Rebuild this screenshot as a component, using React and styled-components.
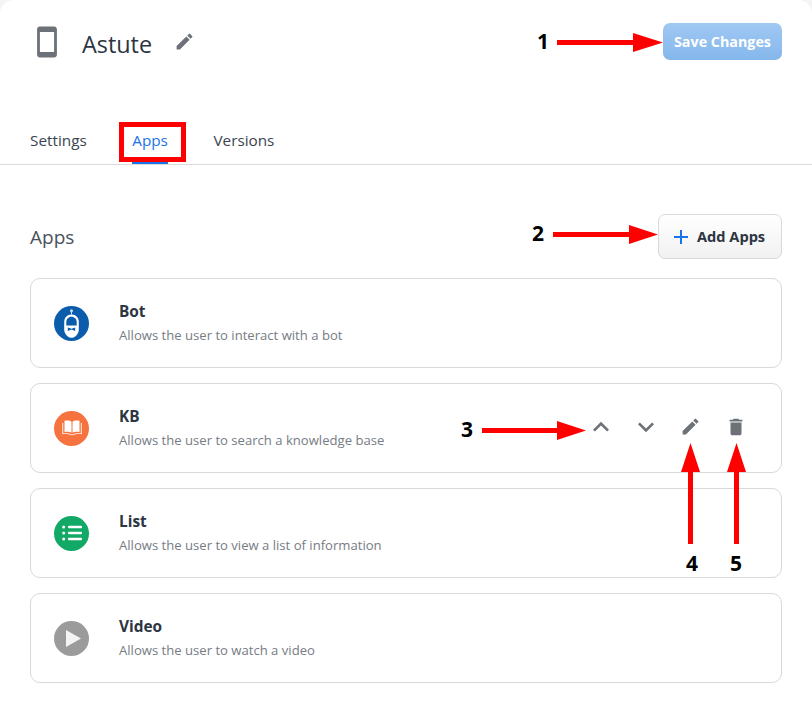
import React from 'react';
import styled, { createGlobalStyle } from 'styled-components';
import { MdSmartphone, MdEdit, MdAdd, MdKeyboardArrowUp, MdKeyboardArrowDown, MdDelete } from 'react-icons/md';

const GlobalStyle = createGlobalStyle`
  html, body { margin: 0; padding: 0; background: #f4f4f4; }
  body { font-family: "Open Sans", "Noto Sans", sans-serif; color: #2c3542; }
  * { box-sizing: border-box; }
`;

const Page = styled.div`
  position: relative;
  width: 812px;
  height: 713px;
  background: #fff;
  border-radius: 14px 14px 0 0;
  overflow: hidden;
`;

const Header = styled.header`
  display: flex;
  align-items: flex-start;
  justify-content: space-between;
  height: 122px;
  padding: 23px 30px 0;
`;

const TitleGroup = styled.div`
  display: flex;
  align-items: center;
  height: 37px;
  color: #6c7278;
`;

const AppName = styled.h1`
  margin: 4px 22px 0 18px;
  font-size: 23.4px;
  font-weight: 400;
  line-height: 42px;
  color: #2c3542;
`;

const SaveButton = styled.button`
  width: 119px;
  height: 37px;
  padding: 0;
  border: 0;
  border-radius: 7px;
  background: linear-gradient(#a0c8f3, #85b7ec);
  color: #fff;
  font: 700 14.3px "Open Sans", sans-serif;
`;

const Tabs = styled.nav`
  display: flex;
  gap: 45.5px;
  height: 43px;
  padding-left: 30px;
  border-bottom: 1px solid #dcdcdc;
`;

const Tab = styled.a`
  height: 42px;
  padding-top: 6px;
  font-size: 15.3px;
  line-height: 24px;
  color: ${p => (p.$active ? '#1a73e8' : '#3b4450')};
  border-bottom: 3px solid ${p => (p.$active ? '#1a73e8' : 'transparent')};
`;

const Content = styled.main`
  padding: 49px 30px 0;
`;

const SectionHead = styled.div`
  display: flex;
  align-items: center;
  justify-content: space-between;
  height: 45px;
  margin-bottom: 19px;
`;

const SectionTitle = styled.h2`
  margin: 0;
  font-size: 19px;
  font-weight: 400;
  color: #4a525c;
`;

const AddButton = styled.button`
  display: flex;
  align-items: center;
  gap: 4px;
  width: 124px;
  height: 45px;
  padding: 0 0 2px 10px;
  border: 1px solid #d9d9d9;
  border-radius: 7px;
  background: linear-gradient(#fff, #f1f1f1);
  color: #2c3542;
  font: 700 14.6px "Open Sans", sans-serif;

  svg { color: #1a73e8; margin-top: 2px; }
`;

const CardList = styled.div`
  display: flex;
  flex-direction: column;
  gap: 15px;
`;

const Card = styled.div`
  display: flex;
  align-items: center;
  height: 90px;
  padding: 0 23px;
  border: 1px solid #d9d9d9;
  border-radius: 10px;
  background: #fff;
`;

const AppIcon = styled.div`
  display: flex;
  align-items: center;
  justify-content: center;
  flex: none;
  width: 35px;
  height: 35px;
  border-radius: 50%;
  background: ${p => p.$color};
`;

const CardText = styled.div`
  flex: 1;
  margin-left: 30px;
  padding-top: 1px;
`;

const CardTitle = styled.div`
  font-size: 15.4px;
  font-weight: 700;
  line-height: 20px;
  color: #2c3542;
`;

const CardDesc = styled.div`
  margin-top: 3px;
  font-size: 13.1px;
  line-height: 20px;
  color: #767c84;
`;

const Actions = styled.div`
  display: flex;
  margin-top: -3px;
  color: #6c7278;
`;

const ActionSlot = styled.span`
  display: flex;
  align-items: center;
  justify-content: center;
  width: 45px;
`;

const Overlay = styled.svg`
  position: absolute;
  inset: 0;
  pointer-events: none;
`;

const Note = styled.span`
  position: absolute;
  left: ${p => p.$x}px;
  top: ${p => p.$y}px;
  width: 20px;
  font-size: 21px;
  font-weight: 700;
  line-height: 28px;
  text-align: center;
  color: #000;
`;

const BotIcon = () => (
  <svg width="35" height="35" viewBox="0 0 35 35">
    <circle cx="17.500" cy="4.700" r="1.500" fill="#cfe0f2" />
    <rect x="17" y="5.500" width="1" height="3" fill="#cfe0f2" />
    <path d="M17.500 8.500c4.500 0 7.300 3.300 7.300 7.500v7.500c0 4.700-4.200 8.300-7.300 8.300s-7.300-3.600-7.300-8.300V16c0-4.200 2.800-7.500 7.300-7.500z" fill="#fff" />
    <path d="M12.300 19.500v-3.500c0-3 2.200-5.300 5.200-5.300s5.200 2.300 5.200 5.300v3.500z" fill="#0b5cab" />
    <path d="M13.800 21.500l3.700 1.300 3.700-1.300v3.400l-3.700-1.300-3.700 1.300z" fill="#0b5cab" />
  </svg>
);

const BookIcon = () => (
  <svg width="20" height="16" viewBox="0 0 20 16" fill="#fff">
    <path d="M2.500 0.800c2.800-.600 5.800-.300 7 .900v11c-1.700-1-4.500-1.200-7-.700z" />
    <path d="M17.500 0.800c-2.800-.600-5.800-.300-7 .900v11c1.700-1 4.500-1.200 7-.700z" />
    <path d="M0 3v11.300c3.300-.500 6.500-.200 8.500 1h3c2-1.200 5.200-1.500 8.500-1V3h-1.300v10c-3.200-.300-6 .100-8 1.200h-1.400c-2-1.100-4.800-1.500-8-1.200V3z" opacity=".7" />
  </svg>
);

const ListIcon = () => (
  <svg width="20" height="16" viewBox="0 0 20 16" fill="#fff">
    <circle cx="1.700" cy="2" r="1.500" />
    <circle cx="1.700" cy="8" r="1.500" />
    <circle cx="1.700" cy="14" r="1.500" />
    <rect x="6" y="0.800" width="14" height="2.400" rx="1" />
    <rect x="6" y="6.800" width="14" height="2.400" rx="1" />
    <rect x="6" y="12.800" width="14" height="2.400" rx="1" />
  </svg>
);

const PlayIcon = () => (
  <svg width="15" height="17" viewBox="0 0 15 17" style={{ marginLeft: 4 }}>
    <path d="M0 0l15 8.500L0 17z" fill="#f4f4f4" />
  </svg>
);

const apps = [
  { name: 'Bot', desc: 'Allows the user to interact with a bot', color: '#0b5cab', icon: <BotIcon /> },
  { name: 'KB', desc: 'Allows the user to search a knowledge base', color: '#f6733f', icon: <BookIcon />, actions: true },
  { name: 'List', desc: 'Allows the user to view a list of information', color: '#12a966', icon: <ListIcon /> },
  { name: 'Video', desc: 'Allows the user to watch a video', color: '#9b9b9b', icon: <PlayIcon /> },
];

const notes = [
  { label: '1', x: 533, y: 27 },
  { label: '2', x: 528, y: 219 },
  { label: '3', x: 457, y: 415 },
  { label: '4', x: 682, y: 549 },
  { label: '5', x: 726, y: 549 },
];

export default function App() {
  return (
    <Page>
      <GlobalStyle />
      <Header>
        <TitleGroup>
          <MdSmartphone size={34} />
          <AppName>Astute</AppName>
          <MdEdit size={21} />
        </TitleGroup>
        <SaveButton>Save Changes</SaveButton>
      </Header>
      <Tabs>
        <Tab>Settings</Tab>
        <Tab $active>Apps</Tab>
        <Tab>Versions</Tab>
      </Tabs>
      <Content>
        <SectionHead>
          <SectionTitle>Apps</SectionTitle>
          <AddButton><MdAdd size={24} />Add Apps</AddButton>
        </SectionHead>
        <CardList>
          {apps.map(app => (
            <Card key={app.name}>
              <AppIcon $color={app.color}>{app.icon}</AppIcon>
              <CardText>
                <CardTitle>{app.name}</CardTitle>
                <CardDesc>{app.desc}</CardDesc>
              </CardText>
              {app.actions && (
                <Actions>
                  <ActionSlot><MdKeyboardArrowUp size={32} /></ActionSlot>
                  <ActionSlot><MdKeyboardArrowDown size={32} /></ActionSlot>
                  <ActionSlot><MdEdit size={21} /></ActionSlot>
                  <ActionSlot><MdDelete size={22} /></ActionSlot>
                </Actions>
              )}
            </Card>
          ))}
        </CardList>
      </Content>
      <Overlay width="812" height="713" viewBox="0 0 812 713">
        <rect x="121.500" y="124.500" width="62" height="35" fill="none" stroke="#f00" strokeWidth="5" />
        <g fill="#f00">
          <path d="M557 40h76v-7l30 9.500-30 9.500v-7h-76z" />
          <path d="M553 232h76v-7l29 9.500-29 9.500v-7h-76z" />
          <path d="M482 428h75v-7l29 9.500-29 9.500v-7h-75z" />
          <path d="M688 544v-72h-7l9.500-29 9.500 29h-7v72z" />
          <path d="M734 544v-72h-7l9.500-29 9.500 29h-7v72z" />
        </g>
      </Overlay>
      {notes.map(n => <Note key={n.label} $x={n.x} $y={n.y}>{n.label}</Note>)}
    </Page>
  );
}
